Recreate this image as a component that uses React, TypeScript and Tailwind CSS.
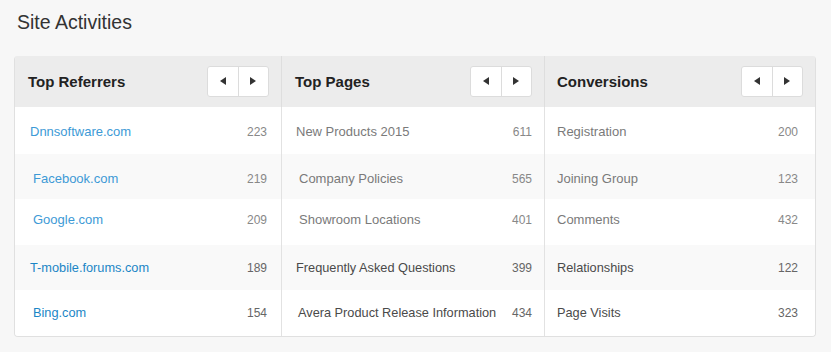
import React from "react";

type Row = { label: string; value: number; indent: string };

type Column = {
  title: string;
  link?: boolean;
  cellClass: string;
  numClass: string;
  rows: Row[];
};

// row heights and small vertical nudges taken from the screenshot
const rowHeights = ["h-[47px]", "h-[45px]", "h-[46px]", "h-[45px]", "h-[46px]"];
const rowNudge = ["pt-[3px]", "pt-[5px]", "pb-[4px]", "pt-[2px]", "pt-[1px]"];

const columns: Column[] = [
  {
    title: "Top Referrers",
    link: true,
    cellClass: "pl-[13px] pr-[12px]",
    numClass: "pr-[14px]",
    rows: [
      { label: "Dnnsoftware.com", value: 223, indent: "pl-[15px]" },
      { label: "Facebook.com", value: 219, indent: "pl-[18px]" },
      { label: "Google.com", value: 209, indent: "pl-[18px]" },
      { label: "T-mobile.forums.com", value: 189, indent: "pl-[15px]" },
      { label: "Bing.com", value: 154, indent: "pl-[18px]" },
    ],
  },
  {
    title: "Top Pages",
    cellClass: "pl-[13px] pr-[12px] border-l border-[#dedede]",
    numClass: "pr-[12px]",
    rows: [
      { label: "New Products 2015", value: 611, indent: "pl-[14px]" },
      { label: "Company Policies", value: 565, indent: "pl-[17px]" },
      { label: "Showroom Locations", value: 401, indent: "pl-[17px]" },
      { label: "Frequently Asked Questions", value: 399, indent: "pl-[14px]" },
      { label: "Avera Product Release Information", value: 434, indent: "pl-[16px]" },
    ],
  },
  {
    title: "Conversions",
    cellClass: "pl-[12px] pr-[12px] border-l border-[#dedede]",
    numClass: "pr-[17px]",
    rows: [
      { label: "Registration", value: 200, indent: "pl-[12px]" },
      { label: "Joining Group", value: 123, indent: "pl-[12px]" },
      { label: "Comments", value: 432, indent: "pl-[12px]" },
      { label: "Relationships", value: 122, indent: "pl-[12px]" },
      { label: "Page Visits", value: 323, indent: "pl-[12px]" },
    ],
  },
];

function Pager() {
  return (
    <div className="flex h-[31px] w-[62px] rounded-[3px] border border-[#dcdcdc] bg-white">
      <button className="flex flex-1 items-center justify-center border-r border-[#dcdcdc]">
        <svg width="6" height="8" viewBox="0 0 6 8">
          <path d="M6 0 L0 4 L6 8 Z" fill="#333" />
        </svg>
      </button>
      <button className="flex flex-1 items-center justify-center">
        <svg width="6" height="8" viewBox="0 0 6 8">
          <path d="M0 0 L6 4 L0 8 Z" fill="#333" />
        </svg>
      </button>
    </div>
  );
}

export default function App() {
  return (
    <div
      className="h-[352px] w-[831px] bg-[#f7f7f7]"
      style={{ fontFamily: '"Liberation Sans", Arial, sans-serif' }}
    >
      <h1 className="pl-[17px] pt-[13px] text-[19.5px] leading-none font-normal text-[#333]">
        Site Activities
      </h1>

      <div className="mt-[23px] ml-[14px] mr-[15px] flex overflow-hidden rounded-[4px] border-x border-b border-[#e0e0e0]">
        {columns.map((col, ci) => (
          <div
            key={col.title}
            className={
              ci === 0
                ? "flex w-[266px] flex-col"
                : ci === 1
                ? "flex w-[263px] flex-col"
                : "flex w-[271px] flex-col"
            }
          >
            <div
              className={`flex h-[51px] items-center justify-between bg-[#ececec] ${col.cellClass}`}
            >
              <h2 className="pt-[3px] text-[15px] font-bold text-[#222]">{col.title}</h2>
              <Pager />
            </div>
            {col.rows.map((row, ri) => {
              const strong = ri >= 3;
              const labelColor = col.link
                ? strong
                  ? "text-[#1b86c6]"
                  : "text-[#3d9ad6]"
                : strong
                ? "text-[#4a4a4a]"
                : "text-[#7a7a7a]";
              return (
                <div
                  key={row.label}
                  className={`flex items-center justify-between ${rowHeights[ri]} ${rowNudge[ri]} ${
                    ri % 2 === 1 ? "bg-[#f9f9f9]" : "bg-white"
                  } ${ci > 0 ? "border-l border-[#e2e2e2]" : ""}`}
                >
                  <span
                    className={`${row.indent} ${labelColor} ${
                      strong ? "text-[12.75px]" : "text-[13px]"
                    } whitespace-nowrap`}
                  >
                    {row.label}
                  </span>
                  <span
                    className={`${col.numClass} text-[12px] ${
                      strong ? "text-[#666]" : "text-[#888]"
                    }`}
                  >
                    {row.value}
                  </span>
                </div>
              );
            })}
          </div>
        ))}
      </div>
    </div>
  );
}
